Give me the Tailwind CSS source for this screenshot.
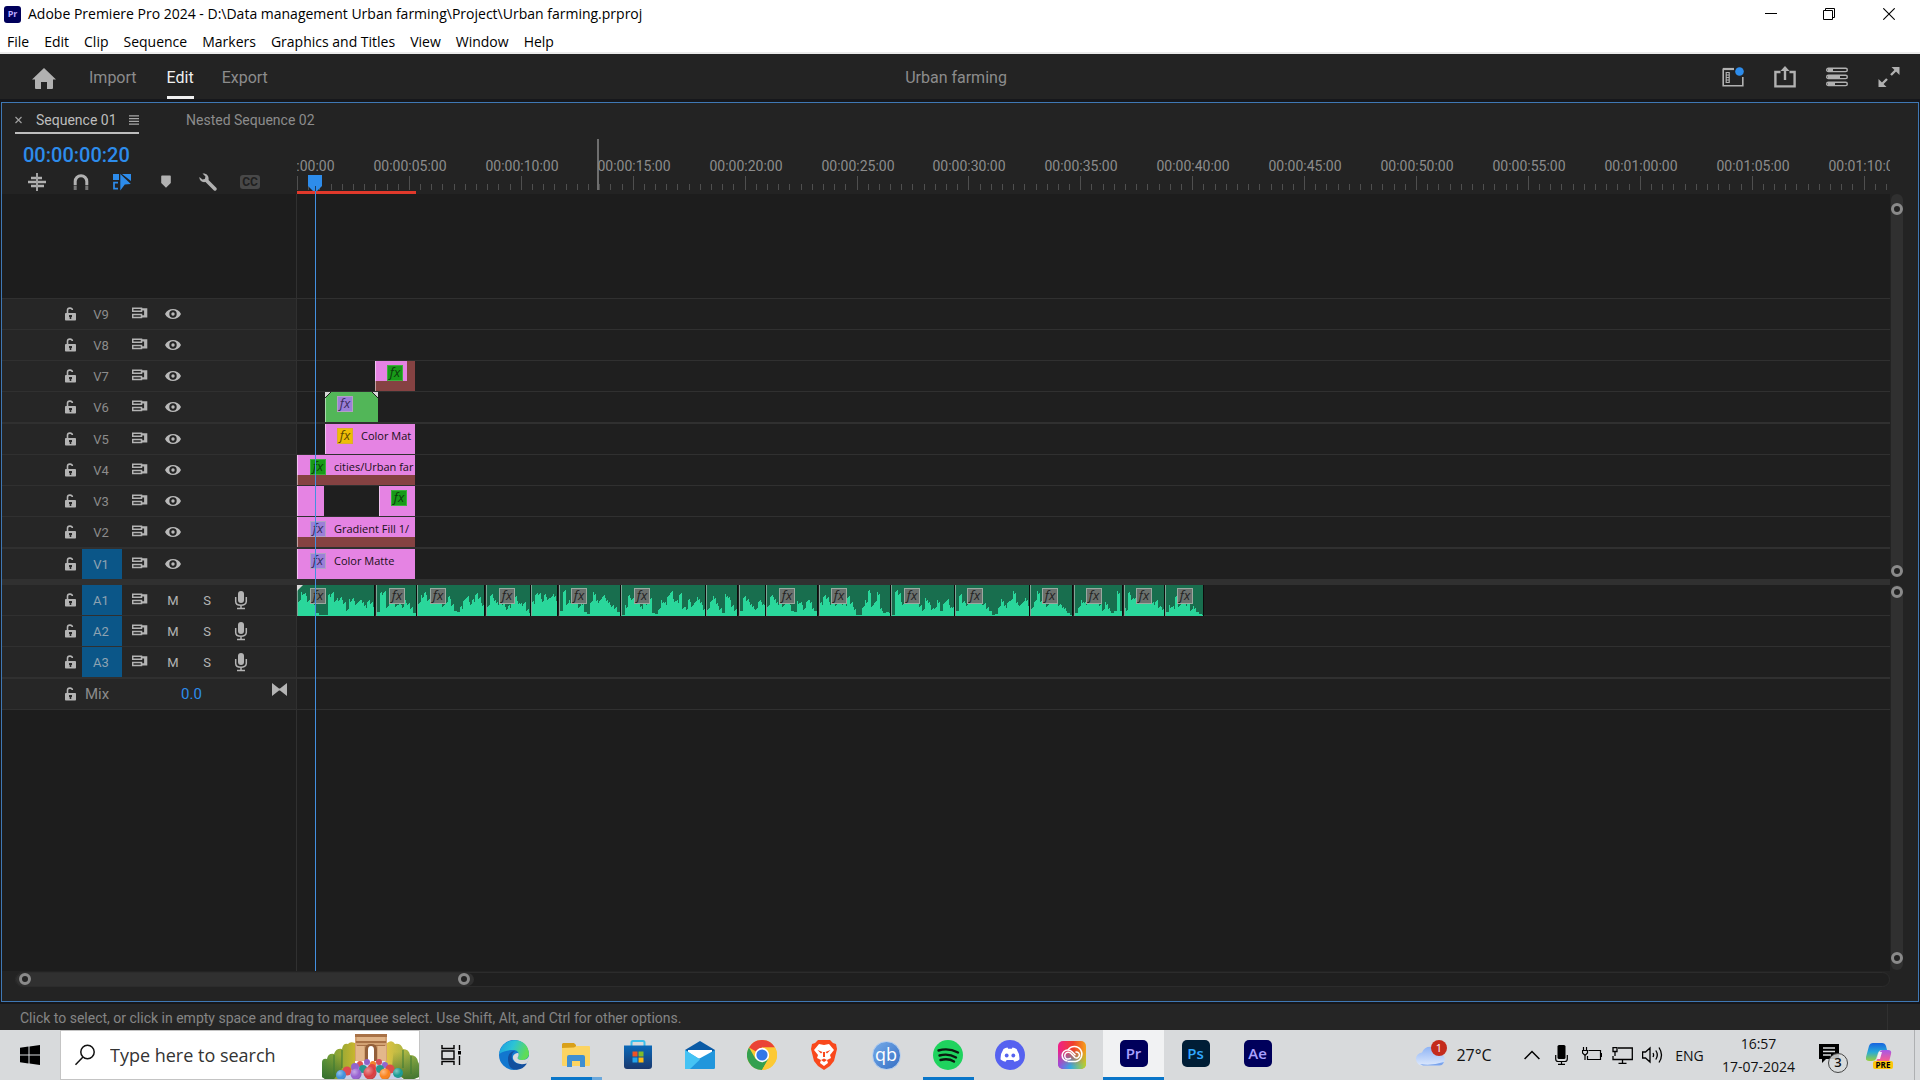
<!DOCTYPE html>
<html lang="en">
<head>
<meta charset="utf-8">
<title>Adobe Premiere Pro 2024</title>
<script src="https://cdn.jsdelivr.net/npm/@tailwindcss/browser@4"></script>
</head>
<body class="flex h-screen min-h-[760px] flex-col overflow-hidden bg-[#16171b] font-['Open_Sans','Noto_Sans',sans-serif]">

<svg class="hidden" aria-hidden="true">
  <symbol id="lock" viewBox="0 0 12 14"><path d="M2.500 6.500V3.200C2.500 .6 7 .3 7.400 3" fill="none" stroke="#b4b4b4" stroke-width="1.600"/><rect x="0" y="6" width="11" height="7.500" rx=".8" fill="#b4b4b4"/><path d="M4 8h3v2H6.300v2H4.700v-2H4z" fill="#262626"/></symbol>
  <symbol id="sync" viewBox="0 0 16 12"><path d="M.7 1.200h8.800v3H.7zM.7 7.400h8.800v3H.7z" fill="none" stroke="#b4b4b4" stroke-width="1.500"/><path d="M9.500 1.200h5.800v9.400H9.500V8.200h2.600V3.600H9.500z" fill="#b4b4b4"/></symbol>
  <symbol id="eye" viewBox="0 0 16 12"><path d="M0 6C3-.6 13-.6 16 6 13 12.600 3 12.600 0 6z" fill="#b9b9b9"/><circle cx="8" cy="6" r="3.700" fill="#222"/><circle cx="8" cy="6" r="1.700" fill="#b9b9b9"/></symbol>
  <symbol id="mic" viewBox="0 0 14 19"><rect x="4" y="0" width="6" height="12" rx="3" fill="#b4b4b4"/><path d="M1.700 6v4.500c0 5 10.600 5 10.600 0V6M7 14.500V17M3 17.500h8" fill="none" stroke="#b4b4b4" stroke-width="1.500"/></symbol>
</svg>

<!-- Window title and menu bar -->
<header class="h-[54px] shrink-0 border-b-2 border-[#ececec] bg-white text-black">
  <div class="flex h-7 items-center">
    <span class="ml-1 flex h-[17px] w-[17px] items-center justify-center rounded-[3px] bg-[#00005b] text-[9px] font-bold text-[#b9a8ff]">Pr</span>
    <h1 class="ml-[7px] whitespace-nowrap text-[14px] leading-5">Adobe Premiere Pro 2024 - D:\Data management Urban farming\Project\Urban farming.prproj</h1>
    <div class="ml-auto flex">
      <button aria-label="Minimize" class="flex h-7 w-[59px] items-center justify-center"><svg width="12" height="12" viewBox="0 0 12 12"><path d="M0 5.500h12" stroke="#000"/></svg></button>
      <button aria-label="Restore" class="flex h-7 w-[58px] items-center justify-center"><svg width="12" height="12" viewBox="0 0 12 12"><path d="M.5 2.500h9v9h-9zM2.500 2.500v-2h9v9h-2" fill="none" stroke="#000"/></svg></button>
      <button aria-label="Close" class="flex h-7 w-[62px] items-center justify-center"><svg width="12" height="12" viewBox="0 0 12 12"><path d="M.3.3l11.400 11.400M11.700.3L.3 11.700" stroke="#000" stroke-width="1.100"/></svg></button>
    </div>
  </div>
  <nav class="flex h-6 items-center gap-[15px] pt-[3px] pl-[7px] text-[14px] leading-5">
    <a href="#">File</a><a href="#">Edit</a><a href="#">Clip</a><a href="#">Sequence</a><a href="#">Markers</a><a href="#" class="whitespace-nowrap">Graphics and Titles</a><a href="#">View</a><a href="#">Window</a><a href="#">Help</a>
  </nav>
</header>

<!-- Workspace header -->
<div class="grid h-[45px] shrink-0 grid-cols-[1fr_auto_1fr] items-center bg-[#232323] font-['Roboto','Open_Sans',sans-serif] text-[16px] text-[#8c8c8c]">
  <nav class="flex h-full items-center">
    <a href="#" aria-label="Home" class="ml-8 pt-[3px]"><svg width="24" height="21" viewBox="0 0 24 21"><path d="M12 0l12 11.500h-3V20a1 1 0 01-1 1h-5v-7H9v7H4a1 1 0 01-1-1v-8.500H0z" fill="#b1b1b1"/></svg></a>
    <a href="#" class="ml-[33px] pt-[3px]">Import</a>
    <a href="#" class="ml-[30px] flex h-full items-center border-b-3 border-[#f0f0f0] pt-[6px] text-[#f0f0f0]">Edit</a>
    <a href="#" class="ml-[28px] pt-[3px]">Export</a>
  </nav>
  <p class="pt-[3px] pr-2">Urban farming</p>
  <div class="flex justify-end gap-[30px] pt-px pr-5">
    <button aria-label="Workspaces"><svg width="22" height="22" viewBox="0 0 22 22"><path d="M12 3.200H1.200v16.600h19.600V11" fill="none" stroke="#b1b1b1" stroke-width="1.600"/><path d="M1 3h11" stroke="#b1b1b1" stroke-width="2.200"/><path d="M4.200 6.500h3v10h-3zM4.200 9h3M4.200 11.500h3M4.200 14h3" fill="none" stroke="#b1b1b1" stroke-width="1.200"/><circle cx="17.500" cy="5.500" r="4.300" fill="#2d8ceb"/></svg></button>
    <button aria-label="Quick export"><svg width="22" height="22" viewBox="0 0 22 22"><path d="M6.500 6H1.400v14.400h19.200V6h-5.100M11 14V3" fill="none" stroke="#b1b1b1" stroke-width="2.400"/><path d="M11 0l4.500 5h-9z" fill="#b1b1b1"/></svg></button>
    <button aria-label="Progress"><svg width="22" height="20" viewBox="0 0 22 20"><g fill="none" stroke="#b1b1b1" stroke-width="1.400"><rect x=".7" y="1.200" width="20.600" height="3.400" rx="1.700"/><rect x=".7" y="8.200" width="20.600" height="3.400" rx="1.700"/><rect x=".7" y="15.200" width="20.600" height="3.400" rx="1.700"/></g><path d="M2 2.900h5M2 9.900h12M2 16.900h7" stroke="#b1b1b1" stroke-width="2.500"/></svg></button>
    <button aria-label="Full screen"><svg width="22" height="22" viewBox="0 0 22 22"><path d="M13 9l6-6M3 19l6-6" stroke="#b1b1b1" stroke-width="2.400"/><path d="M13.500 1H21.500v8zM.5 13v8h8z" fill="#b1b1b1"/></svg></button>
  </div>
</div>

<!-- Timeline panel -->
<main class="mt-[3px] ml-px mr-px flex min-h-0 flex-1 flex-col border border-[#3f78b4] bg-[#232323] font-['Roboto','Open_Sans',sans-serif]">
  <div class="flex h-9 shrink-0 items-start text-[15px]">
    <div class="ml-[13px] flex h-[31px] items-center border-b-2 border-[#bdbdbd] pt-[5px] text-[#bdbdbd]">
      <button aria-label="Close sequence"><svg width="7" height="8" viewBox="0 0 7 8"><path d="M.5 1l6 6M6.500 1l-6 6" stroke="#a0a0a0" stroke-width="1.200"/></svg></button>
      <a href="#" class="ml-[14px] w-[79px] whitespace-nowrap text-[14px]">Sequence 01</a>
      <button aria-label="Panel menu" class="ml-[14px]"><svg width="10" height="10" viewBox="0 0 10 10"><path d="M0 .8h10M0 3.600h10M0 6.400h10M0 9.200h10" stroke="#a8a8a8" stroke-width="1.200"/></svg></button>
    </div>
    <a href="#" class="ml-[47px] flex h-[31px] items-center pt-[3px] text-[14px] text-[#8c8c8c]">Nested Sequence 02</a>
  </div>

  <!-- Timecode, tools and ruler -->
  <div class="flex h-[55px] shrink-0">
    <div class="w-[295px] shrink-0">
      <div class="flex h-8 items-center pl-[21px] text-[20px] font-medium leading-6 text-[#2d8ceb]">00:00:00:20</div>
      <div class="flex h-[21px] items-center pl-[26px]">
        <button aria-label="Insert as nest"><svg width="18" height="18" viewBox="0 0 18 18"><path d="M9 0v18" stroke="#b1b1b1" stroke-width="1.800"/><path d="M3 5h5M10 5h4M0 9h8M10 9h8M3 13h5M10 13h6" stroke="#b1b1b1" stroke-width="2.600"/></svg></button>
        <button aria-label="Snap" class="ml-[27px]"><svg width="16" height="16" viewBox="0 0 16 16"><path d="M2.200 11V7.500a5.800 5.800 0 0111.600 0V11" fill="none" stroke="#b1b1b1" stroke-width="3"/><path d="M2.200 11.500V16M13.800 11.500V16" stroke="#777" stroke-width="3"/></svg></button>
        <button aria-label="Linked selection" class="ml-[24px]"><svg width="18" height="18" viewBox="0 0 18 18"><path d="M0 1h6v6H0zM9 1h9v7z" fill="#2d8ceb"/><path d="M5 9.700H1v6h4" fill="none" stroke="#2d8ceb" stroke-width="1.700"/><path d="M7.300 1l10.500 10-6 .5-4.500 6z" fill="#2d8ceb"/></svg></button>
        <button aria-label="Add marker" class="ml-[30px]"><svg width="10" height="13" viewBox="0 0 10 13"><path d="M1 .5h8a.8.8 0 01.8.8V8L5 12.800.2 8V1.300A.8.8 0 011 .5z" fill="#b1b1b1"/></svg></button>
        <button aria-label="Timeline display settings" class="ml-[28px]"><svg width="18" height="18" viewBox="0 0 18 18"><path d="M3.500.6l3 3L5.800 6 3.500 6.600.4 3.900C.2 7.500 3 9.800 6.500 9L15 17.600c1.600.9 3.400-.9 2.500-2.500L9.500 7C10.300 3 7.500 0 3.500.6z" fill="#b1b1b1"/></svg></button>
        <button aria-label="Captions" class="ml-[23px] flex h-[14px] w-5 items-center justify-center rounded-[3px] bg-[#484848] text-[12px] font-bold text-[#1f1f1f]">CC</button>
      </div>
    </div>
    <div id="ruler" class="relative min-w-0 flex-1 overflow-hidden text-[14px] text-[#8c8c8c]">
      <svg id="ticks" class="absolute inset-0 h-full w-full" aria-hidden="true"></svg>
      <div class="absolute top-0 left-[300px] h-[51px] w-[2px] bg-[#6e6e6e]"></div>
      <div class="absolute top-[52px] left-0 h-[3px] w-[119px] bg-[#e0392b]"></div>
      <svg class="absolute top-9 left-[11px]" width="14" height="19" viewBox="0 0 14 19"><path d="M0 0h14v11l-5 5H5l-5-5z" fill="#2d8ceb"/><path d="M7.500 11v5" stroke="#1b3a5e"/><path d="M7.500 16v3" stroke="#3f86d0"/></svg>
    </div>
    <div class="w-7 shrink-0"></div>
  </div>

  <!-- Tracks -->
  <div class="flex min-h-0 flex-1 bg-[#1d1d1d]">
    <div class="relative flex min-w-0 flex-1 flex-col overflow-hidden">
      <div class="h-[104px] w-[295px] shrink-0 border-r border-[#303030]"></div>
      <div id="tracks" class="shrink-0 border-t border-[#303030] text-[#8c8c8c]"></div>
      <div class="w-[295px] flex-1 border-r border-[#303030]"></div>
      <div class="absolute inset-y-0 left-[313px] w-px bg-[#4390e0]"></div>
    </div>
    <div class="flex w-7 shrink-0 flex-col bg-[#232323] pl-px">
      <div class="relative h-[380px] w-3 rounded-full bg-[#303030]">
        <button aria-label="Zoom video tracks, top" class="absolute top-[9px] left-0 h-3 w-3 rounded-full border-3 border-[#8a8a8a] bg-[#232323]"></button>
        <button aria-label="Zoom video tracks, bottom" class="absolute bottom-[-3px] left-0 h-3 w-3 rounded-full border-3 border-[#8a8a8a] bg-[#232323]"></button>
      </div>
      <div class="relative mt-[11px] mb-px w-3 flex-1 rounded-full bg-[#303030]">
        <button aria-label="Zoom audio tracks, top" class="absolute top-[1px] left-0 h-3 w-3 rounded-full border-3 border-[#8a8a8a] bg-[#232323]"></button>
        <button aria-label="Zoom audio tracks, bottom" class="absolute bottom-[6px] left-0 h-3 w-3 rounded-full border-3 border-[#8a8a8a] bg-[#232323]"></button>
      </div>
    </div>
  </div>

  <!-- Horizontal zoom bar -->
  <div class="h-[30px] shrink-0 pt-px pr-7 pl-[13px]">
    <div class="relative h-[15px] rounded-full border border-[#2c2c2c] bg-[#1f1f1f]">
      <div class="absolute inset-y-0 left-0 w-[458px] rounded-full bg-[#303030]"></div>
      <button aria-label="Zoom timeline, left" class="absolute top-0 left-[3px] h-3 w-3 rounded-full border-3 border-[#8a8a8a] bg-[#232323]"></button>
      <button aria-label="Zoom timeline, right" class="absolute top-0 left-[442px] h-3 w-3 rounded-full border-3 border-[#8a8a8a] bg-[#232323]"></button>
    </div>
  </div>
</main>

<!-- Status bar -->
<div class="mt-[2px] flex h-[26px] shrink-0 items-center bg-[#252525] pl-5 font-['Roboto','Open_Sans',sans-serif] text-[14px] text-[#858585]">
  <p class="whitespace-nowrap pt-[2px]">Click to select, or click in empty space and drag to marquee select. Use Shift, Alt, and Ctrl for other options.</p>
  <div class="ml-auto mr-8 h-full w-px bg-[#303030]"></div>
</div>

<!-- Taskbar -->
<footer class="flex h-[50px] shrink-0 bg-[#d8dadc] text-[#111]">
  <button aria-label="Start" class="flex w-[60px] items-center justify-center"><svg width="20" height="20" viewBox="0 0 20 20"><path d="M0 2.800l8.500-1.200v7.900H0zM9.500 1.500L20 0v9.500H9.500zM0 10.500h8.500v7.900L0 17.200zM9.500 10.500H20V20L9.500 18.500z" fill="#000"/></svg></button>
  <label class="flex w-[360px] items-center border border-[#c4c4c4] bg-white">
    <svg class="ml-[13px]" width="22" height="22" viewBox="0 0 22 22"><circle cx="13.500" cy="8" r="6.700" fill="none" stroke="#111" stroke-width="1.500"/><path d="M9 13L1.500 20.800" stroke="#111" stroke-width="1.500"/></svg>
    <input type="text" placeholder="Type here to search" class="ml-[14px] w-[208px] min-w-0 bg-transparent text-[18px] text-black outline-none placeholder:text-[#333]">
    <svg class="ml-auto self-end" width="97" height="46" viewBox="0 0 97 46" aria-hidden="true">
      <defs><linearGradient id="gl"><stop offset="0" stop-color="#5a963c"/><stop offset="1" stop-color="#c8b62e"/></linearGradient><linearGradient id="gr"><stop offset="0" stop-color="#e2c443"/><stop offset="1" stop-color="#86ab45"/></linearGradient><linearGradient id="gd" x2="0" y2="1"><stop offset=".2" stop-color="#27622b" stop-opacity="0"/><stop offset="1" stop-color="#27622b" stop-opacity=".75"/></linearGradient>
      <radialGradient id="hl" cx=".35" cy=".3" r=".8"><stop offset="0" stop-color="#fff" stop-opacity=".45"/><stop offset=".6" stop-color="#fff" stop-opacity="0"/><stop offset="1" stop-color="#000" stop-opacity=".25"/></radialGradient></defs>
      <path d="M20 46h60l6-6-20-12-40 4z" fill="#c9cfe8"/>
      <path d="M0 44V30q0-5 5-4 1-6 7-5 2-6 8-5 1-6 6-5 2-3 7-1v24L18 46H3z" fill="url(#gl)"/>
      <path d="M65 10q5-4 8 1 6-1 8 5 6 0 7 6 7 0 8 7 1 1 1 3v12l-5 2H82L63 32z" fill="url(#gr)"/>
      <path d="M0 44V30q0-5 5-4 1-6 7-5 2-6 8-5v20L12 46H3z" fill="url(#gd)"/>
      <path d="M72 12q7-1 9 4 6 0 7 6 7 0 8 7 1 1 1 3v12l-5 2H82L70 35z" fill="url(#gd)"/>
      <path d="M12 22v20M20 17v18M81 17v18M89 23v18" stroke="#3c7a34" stroke-opacity=".5" stroke-width="2"/>
      <path d="M33 2h32v26H33z" fill="#d3a273"/><path d="M33 1h32v3H33zM34 8h30v2H34zM35 12h28v1H35z" fill="#a87146"/><path d="M35 4h28v4H35z" fill="#e0b488"/>
      <path d="M34 13h8v15h-8zM56 13h8v15h-8z" fill="#e3b78b"/><path d="M43 28V16q0-5 6-5t6 5v12z" fill="#935f3a"/><path d="M46 28V17q0-4 3-4t3 4v11z" fill="#fff"/>
      <circle cx="38" cy="31" r="3" fill="#e0524f"/><circle cx="45" cy="29" r="3" fill="#8f62c9"/><circle cx="51" cy="31" r="3" fill="#f4822c"/><circle cx="57" cy="29" r="3" fill="#d84b58"/><circle cx="63" cy="32" r="3" fill="#9166cf"/>
      <circle cx="33" cy="34" r="4" fill="#9064cb"/><circle cx="41" cy="36" r="4" fill="#26978f"/><circle cx="50" cy="35" r="4" fill="#e24743"/><circle cx="58" cy="36" r="4" fill="#29978f"/><circle cx="68" cy="36" r="4.500" fill="#dd4c4a"/>
      <circle cx="25" cy="38" r="4.500" fill="#e04a4f"/><circle cx="19" cy="42" r="5" fill="#3f8fdb"/><circle cx="34" cy="41" r="5.500" fill="#965fd0"/><circle cx="48" cy="40" r="6.500" fill="#d93a3f"/><circle cx="63" cy="41" r="5.500" fill="#fb8119"/><circle cx="76" cy="40" r="5" fill="#169a92"/>
      <g fill="url(#hl)"><circle cx="19" cy="42" r="5"/><circle cx="34" cy="41" r="5.500"/><circle cx="48" cy="40" r="6.500"/><circle cx="63" cy="41" r="5.500"/><circle cx="76" cy="40" r="5"/></g>
    </svg>
  </label>
  <nav class="flex">
    <button aria-label="Task view" class="flex w-[63px] items-center justify-center"><svg width="22" height="20" viewBox="0 0 22 20"><path d="M1 0v3.500h12V0M1 20v-3.500h12V20M1 6h12v8H1zM18.500 0v5M18.500 11v9" fill="none" stroke="#000" stroke-width="1.400"/><path d="M17 6h3v3.500h-3z" fill="#000"/></svg></button>
    <button aria-label="Edge" class="flex w-[62px] items-center justify-center"><svg width="30" height="30" viewBox="0 0 30 30"><defs><linearGradient id="e1" x2="1" y2=".3"><stop offset="0" stop-color="#1b9de2"/><stop offset=".5" stop-color="#2cc3d6"/><stop offset="1" stop-color="#5fdc57"/></linearGradient></defs><circle cx="15" cy="15" r="15" fill="#1277cf"/><path d="M.3 14C2-3 28-5 30 13c.3 5-4 7.500-8 7-3-.4-4-1.700-3-3 2-3 0-7-4.500-7C9 10 4 11 .3 14z" fill="url(#e1)"/><path d="M9 19c0-5 3-8 7-8-2.500 1.500-4 4-3 7.500 1.300 4.500 7.500 6.500 13.500 4.500l1.300.8C24 30 16 31.500 11.500 27.500 10 26 9 22 9 19z" fill="#124f9e"/><path d="M27.500 23.500C31 19 30 18 30 16c-1 3-4 4.500-8 4-3-.4-4-1.700-3-3 .8-1.300.9-2.500.3-4-4.500 0-6.300 3.500-5 6.500 2 4.500 8 5.500 13.200 4z" fill="#d8dadc"/></svg></button>
    <button aria-label="File Explorer" class="relative flex w-[62px] items-center justify-center"><svg width="28" height="24" viewBox="0 0 28 24"><path d="M1 0h11l2 2v4H0V1z" fill="#d9a01a"/><path d="M0 5l12-.5L14.500 3H27a1 1 0 011 1v18a1 1 0 01-1 1H1a1 1 0 01-1-1z" fill="#fcd462"/><path d="M5 24V14a2 2 0 012-2h14a2 2 0 012 2v10h-5v-6h-8v6z" fill="#3f8fd2"/></svg><span class="absolute right-[5px] bottom-0 left-[6px] flex h-[3px] bg-[#0a76c9]"><span class="ml-auto w-[10px] bg-[#6ba8dc]"></span></span></button>
    <button aria-label="Microsoft Store" class="flex w-[62px] items-center justify-center"><svg width="28" height="30" viewBox="0 0 28 30"><defs><linearGradient id="st" x2="0" y2="1"><stop offset="0" stop-color="#0b69b9"/><stop offset="1" stop-color="#19386e"/></linearGradient></defs><path d="M7.500 6V2.500q0-1.500 1.500-1.500h10q1.500 0 1.500 1.500V6" fill="none" stroke="#3cc0ec" stroke-width="2"/><path d="M0 5.500h28V26q0 3-3 3H3q-3 0-3-3z" fill="url(#st)"/><path fill="#f05325" d="M8.500 11.500h5v5h-5z"/><path fill="#7fba2a" d="M14.500 11.500h5v5h-5z"/><path fill="#23a4ea" d="M8.500 17.500h5v5h-5z"/><path fill="#fdb913" d="M14.500 17.500h5v5h-5z"/></svg></button>
    <button aria-label="Mail" class="flex w-[62px] items-center justify-center"><svg width="30" height="28" viewBox="0 0 30 28"><path d="M0 9L15 0l15 9v6H0z" fill="#0a5aa5"/><path d="M3 9h24v8H3z" fill="#fff"/><path d="M0 9l16 10L30 28H0z" fill="#33b1ea"/><path d="M30 9L10 20 0 28h29l1-1z" fill="#2196dc"/><path d="M0 9l15 9.500L5 28H0z" fill="#45c3f4"/></svg></button>
    <button aria-label="Chrome" class="flex w-[62px] items-center justify-center"><svg width="30" height="30" viewBox="0 0 30 30"><circle cx="15" cy="15" r="15" fill="#fcc934"/><path d="M15 15L2 7.500A15 15 0 0128 7.500H15z" fill="#ea4335"/><path d="M2 7.500A15 15 0 0015 30l6.500-11.300L15 15 8.500 18.800z" fill="#34a04f"/><path d="M15 30a15 15 0 0013-22.500H15L21.500 18.700z" fill="#fcc934"/><circle cx="15" cy="15" r="7.200" fill="#fff"/><circle cx="15" cy="15" r="5.600" fill="#3478e8"/></svg></button>
    <button aria-label="Brave" class="flex w-[62px] items-center justify-center"><svg width="26" height="30" viewBox="0 0 26 30"><path d="M7 0h12l3 3 3 1 1 5-3 12-4 5-6 4-6-4-4-5L0 9l1-5 3-1z" fill="#f9481c"/><path d="M8 4l5 1 5-1 5 6-4 5 1 3-4 2 1 3-4 3-4-3 1-3-4-2 1-3-4-5z" fill="#fff"/><path d="M6.500 10l5 2-1.500 1.500zM19.500 10l-5 2 1.500 1.500zM10 20l3-1.500 3 1.500-3 2zM12 12h2v5h-2z" fill="#f9481c"/></svg></button>
    <button aria-label="qBittorrent" class="flex w-[62px] items-center justify-center"><span class="flex h-[29px] w-[29px] items-center justify-center rounded-full border border-[#b7d0f0] bg-linear-to-br from-[#76abe9] to-[#356fc4] pb-[3px] text-[18px] leading-5 text-white">qb</span></button>
    <button aria-label="Spotify" class="relative flex w-[62px] items-center justify-center"><svg width="30" height="30" viewBox="0 0 30 30"><circle cx="15" cy="15" r="15" fill="#1fd35e"/><path d="M5.500 10.500q10-3 19.500 2M6.500 15.500q9-2.500 16.500 2M7.500 20q8-2 13.500 1.500" fill="none" stroke="#0b1a10" stroke-width="2.400" stroke-linecap="round"/></svg><span class="absolute right-[5px] bottom-0 left-[6px] h-[3px] bg-[#0a76c9]"></span></button>
    <button aria-label="Discord" class="flex w-[62px] items-center justify-center"><svg width="30" height="30" viewBox="0 0 30 30"><circle cx="15" cy="15" r="15" fill="#5662f0"/><path d="M8.500 9Q10.500 8 12.500 7.600l.7 1.200h3.600l.7-1.200Q19.500 8 21.500 9q3.300 5 2.900 10.500-2.400 2-4.900 2.300l-1.200-1.900h-6.600l-1.200 1.900q-2.500-.3-4.900-2.300Q5.200 14 8.500 9z" fill="#fff"/><ellipse cx="11.700" cy="15.500" rx="1.900" ry="2.100" fill="#5662f0"/><ellipse cx="18.300" cy="15.500" rx="1.900" ry="2.100" fill="#5662f0"/></svg></button>
    <button aria-label="Creative Cloud" class="flex w-[62px] items-center justify-center"><svg width="28" height="28" viewBox="0 0 28 28"><defs><linearGradient id="cc1" x2="1"><stop offset="0" stop-color="#ef1f8c"/><stop offset=".55" stop-color="#f0402a"/><stop offset="1" stop-color="#f6a21c"/></linearGradient><linearGradient id="cc2" x2="1"><stop offset="0" stop-color="#9a4be0"/><stop offset=".45" stop-color="#36a9e0"/><stop offset="1" stop-color="#b8d42a"/></linearGradient><linearGradient id="ccm" x2="0" y2="1"><stop offset=".3" stop-color="#fff" stop-opacity="0"/><stop offset=".9" stop-color="#fff"/></linearGradient><mask id="ccmask"><rect width="28" height="28" fill="url(#ccm)"/></mask></defs><rect width="28" height="28" rx="5" fill="url(#cc1)"/><rect width="28" height="28" rx="5" fill="url(#cc2)" mask="url(#ccmask)"/><path d="M9.500 20a5.500 5.500 0 01.3-11q2.600 0 4.200 1.700l3.500 3.600M10 9.200a7.500 7.500 0 117.500 11.300H9.700M13 17.200q-1.200.9-2.800.9a3.400 3.400 0 010-6.800q1.600 0 2.600 1l4.200 4.300a3 3 0 10.400-5.500" fill="none" stroke="#fff" stroke-width="1.500"/></svg></button>
    <button aria-label="Premiere Pro" class="flex w-[61px] items-center justify-center border-b-3 border-[#0a76c9] bg-[#f1f2f3]"><span class="mb-px flex h-[27px] w-7 items-center justify-center rounded-[5px] bg-[#00005b] text-[15px] font-semibold text-[#a9a0ff]">Pr</span></button>
    <button aria-label="Photoshop" class="flex w-[62px] items-center justify-center"><span class="mb-[3px] ml-[1px] flex h-[27px] w-7 items-center justify-center rounded-[5px] bg-[#001e36] text-[15px] font-semibold text-[#31a8ff]">Ps</span></button>
    <button aria-label="After Effects" class="flex w-[62px] items-center justify-center"><span class="mb-[3px] ml-[1px] flex h-[27px] w-7 items-center justify-center rounded-[5px] bg-[#00005b] text-[15px] font-semibold text-[#a9a0ff]">Ae</span></button>
  </nav>
  <div class="ml-auto flex items-center">
    <button class="flex items-center"><span class="relative"><svg width="30" height="22" viewBox="0 0 30 22"><defs><linearGradient id="cl" x2="0" y2="1"><stop offset="0" stop-color="#8fb4f5"/><stop offset="1" stop-color="#dce8fd"/></linearGradient></defs><path d="M7 21.500a6.500 6.500 0 01-1-13A9 9 0 0123 9a6.300 6.300 0 01.5 12.500z" fill="url(#cl)"/><path d="M4 20q11 2 24-2-1.500 3.500-4.500 3.500H7z" fill="#7ba4ec"/></svg><span class="absolute -top-[4px] -right-px flex h-4 w-4 items-center justify-center rounded-full bg-[#c42b1c] text-[11px] text-white">1</span></span><span class="ml-[9px] w-[38px] text-[16px]">27°C</span></button>
    <button aria-label="Show hidden icons" class="ml-[31px]"><svg width="16" height="10" viewBox="0 0 16 10"><path d="M.6 9L8 1.500 15.400 9" fill="none" stroke="#000" stroke-width="1.500"/></svg></button>
    <button aria-label="Microphone" class="ml-[15px]"><svg width="13" height="20" viewBox="0 0 13 20"><rect x="2.500" y="0" width="8" height="14" rx="1.500" fill="#000"/><path d="M.7 10v4q0 2.500 2.500 2.500h6.600q2.500 0 2.500-2.500v-4M6.500 16.500V19.200M3 19.300h7" fill="none" stroke="#000" stroke-width="1.200"/></svg></button>
    <button aria-label="Battery" class="ml-[14px]"><svg width="20" height="16" viewBox="0 0 20 16"><path d="M6.500 3.500h12v9H5.500v-3.500M19.500 6v4M1.500 0v3M4.500 0v3M.5 3.500h5v2.500L3 8.500.5 6zM3 8.500V13" fill="none" stroke="#000" stroke-width="1.200"/></svg></button>
    <button aria-label="Network" class="ml-[10px]"><svg width="21" height="17" viewBox="0 0 21 17"><path d="M6 1h14.300v11.500H1V9M10.500 12.500V16M6.500 16.300h8M1 .7h4v3.800H1zM3 4.500V9" fill="none" stroke="#000" stroke-width="1.300"/></svg></button>
    <button aria-label="Volume" class="ml-[9px]"><svg width="21" height="18" viewBox="0 0 21 18"><path d="M.6 6H3.500L8 2v14L3.500 12H.6zM11 7q1.200 2 0 4M13.800 4.500q3 4.500 0 9M17 1.500q5 7.500 0 15" fill="none" stroke="#000" stroke-width="1.300"/></svg></button>
    <button class="ml-3 w-[29px] text-[14px]">ENG</button>
    <button class="ml-4 flex w-[77px] flex-col items-center whitespace-nowrap text-[14px] leading-[23px]"><span>16:57</span><span>17-07-2024</span></button>
    <button aria-label="Notifications" class="relative ml-[22px] mb-1"><svg width="20" height="19" viewBox="0 0 20 19"><path d="M0 0h20v15H7l-4 4v-4H0z" fill="#000"/><path d="M4 4h12M4 7.500h12M4 11h8" stroke="#d8dadc" stroke-width="1.300"/></svg><span class="absolute top-[9px] left-[9px] flex h-5 w-5 items-center justify-center rounded-full border border-[#444] bg-[#d8dadc]/85 text-[13px] font-semibold">3</span></button>
    <button aria-label="Copilot" class="relative ml-[27px]"><svg width="26" height="26" viewBox="0 0 26 26"><defs><linearGradient id="cp1" x2="0" y2="1"><stop offset="0" stop-color="#1764e0"/><stop offset=".5" stop-color="#27a9d8"/><stop offset="1" stop-color="#9ad03c"/></linearGradient><linearGradient id="cp2" x2="0" y2="1"><stop offset="0" stop-color="#a558e8"/><stop offset=".6" stop-color="#f05b9a"/><stop offset="1" stop-color="#f8a34a"/></linearGradient></defs><path d="M7 1h9q3 0 4 3l1 4h-5q-3 0-4 3l-2 6q-1 2-4 2H3q-4 0-3-4L3 4q1-3 4-3z" fill="url(#cp1)"/><path d="M17 8h5q4 0 3 4l-2 8q-1 4-4 4h-9q-3 0-3-3 3 0 4-3l2-6q1-4 4-4z" fill="url(#cp2)"/><path d="M13 10h3l-2 7h-3z" fill="#fff" fill-opacity=".85"/></svg><span class="absolute -right-px -bottom-px flex h-2 w-5 items-center justify-center rounded-[2px] bg-[#fdc60b] text-[8px] font-bold leading-none text-black">PRE</span></button>
    <div class="ml-[22px] mr-[5px] h-[50px] w-px bg-[#aeb0b2]"></div>
  </div>
</footer>

<script>
const icon = (id, w, h, cls) => `<svg class="${cls}" width="${w}" height="${h}" aria-hidden="true"><use href="#${id}"/></svg>`;

// Ruler: one labelled tick every five seconds, ten subdivisions between them
const ruler = document.getElementById('ruler'), ticks = document.getElementById('ticks');
const span = ruler.clientWidth;
let d = '';
for (let i = 0; i * 11.19 < span; i++) {
  const x = Math.round(i * 11.19) + .5;
  d += `M${x} ${i % 10 ? 45 : 37}V51`;
}
ticks.innerHTML = `<path d="${d}" stroke="#4f4f4f"/>`;
for (let i = 0; i * 111.9 < span; i++) {
  const s = i * 5, two = n => String(n).padStart(2, '0');
  const label = document.createElement('span');
  label.className = 'absolute top-[17px] w-20 -translate-x-1/2 text-center leading-5 whitespace-nowrap';
  label.style.left = Math.round(i * 111.9) + 1 + 'px';
  label.textContent = `00:${two(Math.floor(s / 60))}:${two(s % 60)}:00`;
  ruler.append(label);
}

// Clips: x offset and width in the lane, with kind, label and effect badge
const badge = {
  green: 'border-[#3fae3f] bg-[#189a18] text-[#0c3a0c]',
  purple: 'border-[#b3a0c4] bg-[#9b7fd8] text-[#392a5c]',
  yellow: 'border-[#dcae2c] bg-[#efbd07] text-[#5b4700]',
  grey: 'border-[#9aa8a0] bg-[#6b716e] text-[#222]'
};
const fx = (kind, x, top) => `<span class="absolute ${top} flex h-4 w-4 items-center justify-center border pb-px text-[13px] leading-none italic font-['Open_Sans',sans-serif] ${badge[kind]}" style="left:${x}px">fx</span>`;
const clip = c => `<div class="absolute inset-y-0 overflow-hidden ${c.bg || 'bg-[#e583e3]'}" style="left:${c.x}px;width:${c.w}px">
  ${c.brown ? '<div class="absolute inset-x-0 bottom-0 h-[10px] bg-[#854242]"></div>' : ''}
  ${c.side ? '<div class="absolute inset-y-0 right-0 w-2 bg-[#854242]"></div>' : ''}
  <div class="absolute inset-y-0 left-0 w-px bg-white/50"></div>
  ${c.corners ? '<svg class="absolute inset-0" width="53" height="6" aria-hidden="true"><path d="M0 0h6L0 6zM53 0h-6l6 6z" fill="#d8d8d8"/><path d="M6 0L0 6M47 0l6 6" stroke="#1d1d1d"/></svg>' : ''}
  ${c.fx ? fx(c.fx, c.fxx, 'top-1') : ''}
  ${c.text ? `<span class="absolute top-1 whitespace-nowrap text-[11px] leading-4 text-[#181018] font-['Open_Sans',sans-serif]" style="left:${c.tx}px">${c.text}</span>` : ''}
</div>`;
const clips = {
  V7: [{ x: 78, w: 40, brown: 1, side: 1, fx: 'green', fxx: 12 }],
  V6: [{ x: 28, w: 53, bg: 'bg-[#52b658]', corners: 1, fx: 'purple', fxx: 12 }],
  V5: [{ x: 28, w: 90, fx: 'yellow', fxx: 12, text: 'Color Mat', tx: 36 }],
  V4: [{ x: 0, w: 118, brown: 1, fx: 'green', fxx: 13, text: 'cities/Urban far', tx: 37 }],
  V3: [{ x: 0, w: 27 }, { x: 82, w: 36, fx: 'green', fxx: 12 }],
  V2: [{ x: 0, w: 118, brown: 1, fx: 'purple', fxx: 13, text: 'Gradient Fill 1/', tx: 37 }],
  V1: [{ x: 0, w: 118, fx: 'purple', fxx: 13, text: 'Color Matte', tx: 37 }]
};

// Audio clips: start, end, badge offset, loudness sampled every three pixels
const audio = [
  [0, 77, 13, '15 22 21 14 18 12 3 0 0 0 20 22 15 16 17 12 6 15 16 11 15 14 9 14 13 7'],
  [79, 119, 92, '4 22 23 9 18 17 9 12 9 14 11 8 3'],
  [120, 187, 133, '13 19 22 15 20 18 22 16 10 14 18 10 5 4 8 15 19 12 15 21 18 11'],
  [189, 233, 202, '9 21 16 12 18 12 7 9 12 19 13 11 12 6 3'],
  [234, 260, 0, '13 21 22 15 20 16 19 20 14'],
  [262, 323, 274, '5 24 12 14 19 13 9 12 4 2 14 22 14 15 20 16 12 9 8 4'],
  [324, 408, 337, '1 9 19 16 14 18 8 19 12 18 3 2 7 14 12 19 24 15 14 21 8 7 15 9 14 17 12 6'],
  [409, 440, 0, '6 15 18 11 6 3 20 17 9 6'],
  [442, 468, 0, '5 18 16 12 8 6 15 12 10'],
  [469, 520, 482, '9 20 17 12 18 10 14 12 5 4 13 12 6 15 14 6 5'],
  [522, 593, 534, '12 19 18 12 18 10 16 12 11 18 13 7 1 0 9 14 24 9 14 22 6 3 4 3'],
  [594, 657, 607, '1 24 22 12 17 12 16 20 13 9 6 16 12 6 8 14 5 12 16 9 7'],
  [658, 732, 670, '5 20 14 11 18 18 13 15 12 11 8 5 1 2 9 15 9 13 16 23 12 10 14 16 9'],
  [733, 775, 745, '7 15 23 13 18 10 18 14 12 11 9 6 3 1'],
  [777, 825, 789, '3 9 14 12 18 16 17 14 10 6 12 6 3 5 23 5'],
  [827, 867, 839, '6 22 16 18 18 19 12 13 17 12 14 9 7'],
  [868, 906, 880, '4 9 8 19 10 18 11 16 6 8 4 2 1']
];
function waveform() {
  let out = '', wave = '', badges = '';
  audio.forEach(([a, b, f, levels]) => {
    out += `<rect x="${a}" y="0" width="${b - a}" height="31" fill="#186e4e"/><path d="M${a + .5} 0v31" stroke="#7fa596"/><path d="M${b + .5} 0v31" stroke="#0c0c0c"/>`;
    const h = levels.split(' ').map(Number);
    let p = `M${a + 1} 31`;
    for (let x = a + 1; x < b; x++) {
      const k = Math.min(Math.floor((x - a - 1) / 3), h.length - 1);
      const v = h[k] > 5 ? h[k] + 2 - (x * 7 % 4) : h[k];
      p += `V${31 - Math.max(1, v)}H${x + 1}`;
    }
    wave += p + 'V31z';
    if (f) badges += fx('grey', f, 'top-[3px]');
  });
  return `<svg class="absolute top-0 left-0" width="907" height="31" aria-hidden="true">${out}<path d="${wave}" fill="#2ad79b"/><path d="M0 0h6L0 6z" fill="#d8d8d8"/></svg>${badges}`;
}

const rowClass = {
  V6: 'h-8 border-b-2', V2: 'h-8 border-b-2', V1: 'h-9 border-b-6', A3: 'h-8 border-b-2'
};
const tracks = ['V9', 'V8', 'V7', 'V6', 'V5', 'V4', 'V3', 'V2', 'V1', 'A1', 'A2', 'A3'];
let html = '';
for (const t of tracks) {
  const isAudio = t[0] === 'A', target = isAudio || t === 'V1';
  html += `<div class="flex border-[#303030] ${rowClass[t] || 'h-[31px] border-b'}">
    <div class="flex w-[295px] shrink-0 items-center border-r border-[#303030] bg-[#262626] pl-[63px]">
      ${icon('lock', 12, 14, '')}
      <button class="ml-[5px] h-full w-10 pt-[2px] pr-[2px] text-center text-[13px] ${target ? 'bg-[#0b5688] text-[#8ea3b2]' : ''}">${t}</button>
      ${icon('sync', 16, 12, 'ml-[10px] mb-[2px]')}
      ${isAudio
        ? `<button class="ml-[17px] w-4 pt-[2px] text-[13px] text-[#b4b4b4]">M</button><button class="ml-[18px] w-4 pt-[2px] text-[13px] text-[#b4b4b4]">S</button>${icon('mic', 14, 19, 'ml-[19px]')}`
        : icon('eye', 16, 12, 'ml-[17px]')}
    </div>
    <div class="relative min-w-0 flex-1 bg-[#1f1f1f]">${(clips[t] || []).map(clip).join('')}${t === 'A1' ? waveform() : ''}</div>
  </div>`;
}
html += `<div class="flex h-[31px] border-b border-[#303030]">
  <div class="flex w-[295px] shrink-0 items-center border-r border-[#303030] bg-[#262626] pl-[63px]">
    ${icon('lock', 12, 14, '')}
    <span class="ml-2 w-24 text-[15px]">Mix</span><span class="w-[91px] text-[15px] text-[#2d8ceb]">0.0</span>
    <svg class="mb-[9px]" width="15" height="13" viewBox="0 0 15 13" aria-hidden="true"><path d="M0 0l7 5.500h1L15 0v13L8 7.500H7L0 13z" fill="#b4b4b4"/></svg>
  </div>
  <div class="min-w-0 flex-1 bg-[#1f1f1f]"></div>
</div>`;
document.getElementById('tracks').innerHTML = html;
</script>
</body>
</html>
